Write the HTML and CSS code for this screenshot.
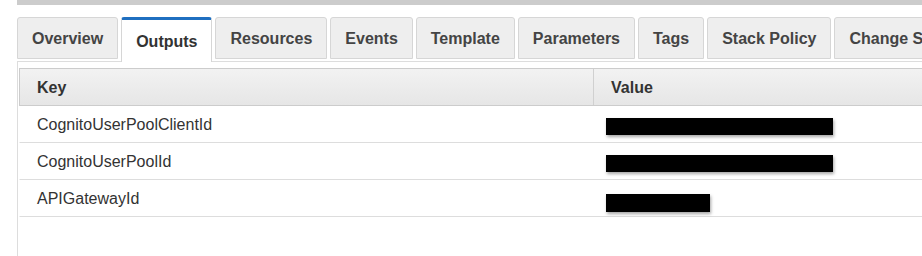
FILE: index.html
```html
<!DOCTYPE html>
<html lang="en">
<head>
  <meta charset="UTF-8">
  <meta name="viewport" content="width=device-width, initial-scale=1.0">
  <title>Stack Outputs</title>
  <link rel="stylesheet" href="styles.css">
</head>
<body>
  <div class="top-strip"></div>

  <div class="stack-detail">
    <!-- Tab strip -->
    <ul class="tabs">
      <li class="tab">Overview</li>
      <li class="tab active">Outputs</li>
      <li class="tab">Resources</li>
      <li class="tab">Events</li>
      <li class="tab">Template</li>
      <li class="tab">Parameters</li>
      <li class="tab">Tags</li>
      <li class="tab">Stack Policy</li>
      <li class="tab">Change Sets</li>
    </ul>

    <!-- Outputs panel -->
    <div class="tab-panel">
      <div class="outputs">
        <div class="outputs-head">
          <div class="col-key">Key</div>
          <div class="col-value">Value</div>
        </div>

        <div class="output-row">
          <div class="col-key">CognitoUserPoolClientId</div>
          <div class="col-value"><span class="redacted" style="width: 227px"></span></div>
        </div>
        <div class="output-row">
          <div class="col-key">CognitoUserPoolId</div>
          <div class="col-value"><span class="redacted" style="width: 227px"></span></div>
        </div>
        <div class="output-row">
          <div class="col-key">APIGatewayId</div>
          <div class="col-value"><span class="redacted tall" style="width: 104px"></span></div>
        </div>
      </div>
    </div>
  </div>
</body>
</html>
```

FILE: styles.css
```css
:root {
  --tab-bg: #eeeeee;
  --tab-border: #d6d6d6;
  --active-color: #1f6fc0;
  --line-color: #dddddd;
  --text-color: #333333;
}

body {
  margin: 0;
  font-family: "Liberation Sans", Arial, sans-serif;
  color: var(--text-color);
  background: #fff;
  overflow: hidden;
}

.top-strip {
  height: 5px;
  margin-left: 17px;
  background: #cccccc;
}

.stack-detail {
  width: 1000px;
  margin-left: 17px;
  padding-top: 12px;
}

/* ===== TABS ===== */
.tabs {
  display: flex;
  align-items: flex-start;
  gap: 3px;
  height: 44px;
  margin: 0;
  padding: 0;
  list-style: none;
  white-space: nowrap;
}

.tab {
  box-sizing: border-box;
  display: flex;
  align-items: center;
  height: 42px;
  padding: 1px 14px 0;
  border: 1px solid var(--tab-border);
  border-radius: 3px 3px 0 0;
  background: var(--tab-bg);
  color: #444;
  font-size: 16px;
  font-weight: bold;
}

.tab.active {
  position: relative;
  z-index: 1;
  height: 45px;
  padding-top: 2px;
  border-top: 3px solid var(--active-color);
  border-bottom: none;
  background: #fff;
  color: #333;
}

/* ===== PANEL ===== */
.tab-panel {
  height: 200px;
  padding: 6px 0 0 1px;
  border-top: 1px solid var(--line-color);
  border-left: 1px solid var(--line-color);
}

.outputs-head,
.output-row {
  box-sizing: border-box;
  display: grid;
  grid-template-columns: 573px 1fr;
}

.outputs-head {
  height: 38px;
  border: 1px solid #cccccc;
  background: linear-gradient(#f2f2f2, #e6e6e6);
  font-size: 16px;
  font-weight: bold;
}

.outputs-head > div {
  display: flex;
  align-items: center;
  padding-top: 1px;
}

.outputs-head .col-key {
  padding-left: 17px;
}

.outputs-head .col-value {
  padding-left: 17px;
  border-left: 1px solid #d0d0d0;
}

.output-row {
  height: 37px;
  border-left: 1px solid transparent;
  border-bottom: 1px solid var(--line-color);
  font-size: 16px;
}

.output-row .col-key {
  display: flex;
  align-items: center;
  padding: 2px 0 0 17px;
}

.output-row .col-value {
  padding: 12px 0 0 13px;
}

.redacted {
  display: block;
  height: 17px;
  background: #000;
  box-shadow: 1px 2px 3px rgba(0, 0, 0, 0.35);
}

.redacted.tall {
  height: 18px;
  margin-top: 2px;
}
```
